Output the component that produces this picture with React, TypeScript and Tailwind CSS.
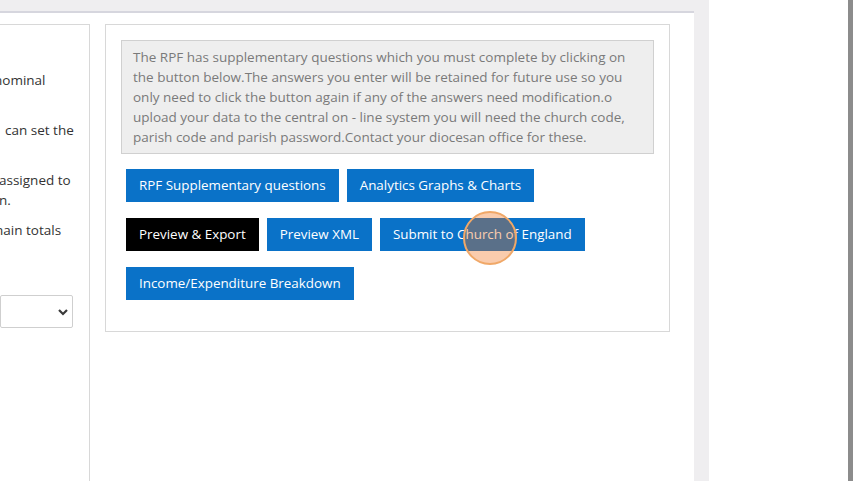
import React from 'react';

const font = { fontFamily: '"Open Sans", "Liberation Sans", sans-serif' };

export default function App() {
  return (
    <div className="relative w-[860px] h-[481px] overflow-hidden bg-[#efeef0] flex" style={font}>
      <div className="w-[694px] shrink-0 flex flex-col">
        <div className="h-[11px] shrink-0" />
        <div className="h-[2px] shrink-0 bg-[#d6d6de]" />
        <div className="flex-1 min-h-0 overflow-hidden bg-white flex items-start pt-[11px]">
          {/* left column, cut off by the viewport */}
          <div className="w-[90px] shrink-0 h-[460px] border-t border-r border-[#d8d8d8] overflow-hidden text-[13.5px] leading-5 text-[#333]">
            <div className="pt-[25px]">
              <p className="h-[40px] pt-[20px] ml-[-6px] whitespace-nowrap">nominal</p>
              <p className="mt-[10px] h-[40px] pt-[20px] ml-[5px] whitespace-nowrap">can set the</p>
              <div className="mt-[10px] h-[60px] pt-[20px] whitespace-nowrap">
                <p className="ml-[-1px]">assigned to</p>
                <p className="ml-[-1px]">n.</p>
              </div>
              <p className="mt-[10px] ml-[-5px] whitespace-nowrap">nain totals</p>
            </div>
            <div className="mt-[55px] mr-[16px] h-[33px] border border-[#cfcfcf] rounded-[2px] flex items-center justify-end pr-[2px]">
              <svg width="12" height="8" viewBox="0 0 12 8" className="mr-[1px]">
                <path d="M2 2 L6 6 L10 2" fill="none" stroke="#3a3a3a" strokeWidth="2.2" />
              </svg>
            </div>
          </div>

          {/* right panel */}
          <div className="ml-[15px] w-[565px] shrink-0 h-[308px] border border-[#d8d8d8] p-[15px]">
            <div className="border border-[#d0d0d0] bg-[#eeeeee] px-[11px] py-[6px] text-[13.5px] leading-5 text-[#7a7a7a]">
              The RPF has supplementary questions which you must complete by clicking on the button below.The answers you enter will be retained for future use so you only need to click the button again if any of the answers need modification.o upload your data to the central on - line system you will need the church code, parish code and parish password.Contact your diocesan office for these.
            </div>
            <div className="mt-[15px] pl-[5px] flex flex-wrap gap-x-[8px] gap-y-[16px] text-[13.4px] text-white">
              <button className="h-[33px] px-[13px] bg-[#0a72c8]">RPF Supplementary questions</button>
              <button className="h-[33px] px-[13px] bg-[#0a72c8]">Analytics Graphs &amp; Charts</button>
              <button className="h-[33px] px-[13px] bg-black">Preview &amp; Export</button>
              <button className="h-[33px] px-[13px] bg-[#0a72c8]">Preview XML</button>
              <button className="h-[33px] px-[13px] bg-[#0a72c8]">Submit to Church of England</button>
              <button className="h-[33px] px-[13px] bg-[#0a72c8]">Income/Expenditure Breakdown</button>
            </div>
          </div>
        </div>
      </div>
      <div className="w-[15px] shrink-0" />
      <div className="w-[139px] shrink-0 bg-white" />
      <div className="w-[5px] shrink-0 bg-[#8c8c8c]" />
      <div className="flex-1 bg-white" />

      {/* click highlight */}
      <div className="absolute left-[463px] top-[211px] w-[54px] h-[54px] rounded-full border-2 border-[#f0a868] bg-[rgba(240,110,20,0.35)]" />
    </div>
  );
}
